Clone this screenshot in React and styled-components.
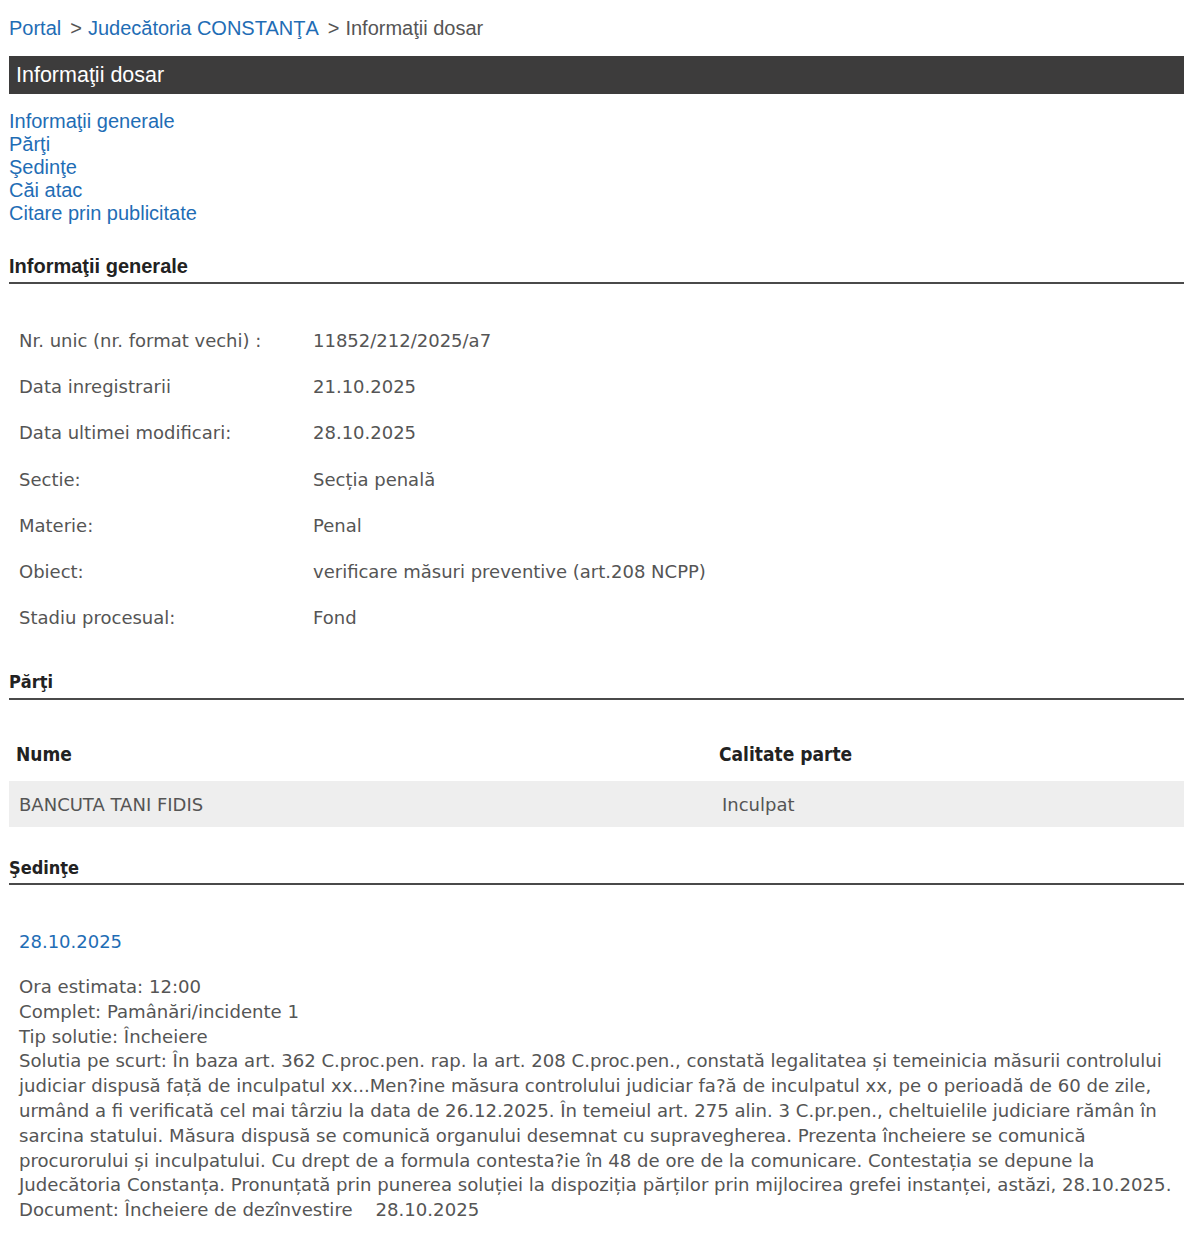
import React from "react";
import styled, { createGlobalStyle } from "styled-components";

const GlobalStyle = createGlobalStyle`
  body {
    margin: 8px;
    background: #ffffff;
    font-family: "Liberation Sans", Arial, sans-serif;
  }
`;

const Page = styled.div`
  width: 1175px;
  padding-left: 1px;
`;

const Breadcrumb = styled.div`
  display: flex;
  align-items: center;
  height: 40px;
  font-size: 20px;
  color: #555555;
`;

const CrumbLink = styled.a`
  color: #1f6db5;
  text-decoration: none;
`;

const CrumbSep = styled.span`
  margin: 0 6px 0 9px;
  color: #555555;
`;

const TitleBar = styled.div`
  margin-top: 8px;
  height: 38px;
  background: #3d3c3c;
  color: #ffffff;
  font-size: 21.5px;
  display: flex;
  align-items: center;
  padding-left: 7px;
  box-sizing: border-box;
`;

const Menu = styled.ul`
  list-style: none;
  margin: 16px 0 0;
  padding: 0;
  font-size: 20px;
  line-height: 23px;
`;

const MenuLink = styled.a`
  color: #1f6db5;
  text-decoration: none;
`;

const SectionTitle = styled.h2`
  margin: ${(p) => p.$top}px 0 0;
  padding: 0 0 ${(p) => p.$gap}px;
  font-family: ${(p) =>
    p.$condensed
      ? '"DejaVu Sans Condensed", "DejaVu Sans", sans-serif'
      : '"Liberation Sans", Arial, sans-serif'};
  font-size: ${(p) => (p.$condensed ? 18 : 20)}px;
  font-weight: bold;
  color: #222222;
  border-bottom: 2px solid #4a4a4a;
  line-height: 24px;
`;

const InfoTable = styled.div`
  margin-top: 33px;
  display: grid;
  grid-template-columns: 294px 1fr;
  padding-left: 10px;
  font-family: "DejaVu Sans", Verdana, sans-serif;
  font-size: 18px;
  color: #555555;
`;

const InfoCell = styled.div`
  height: 46.3px;
  display: flex;
  align-items: center;
`;

const PartyTable = styled.div`
  margin-top: 31px;
`;

const PartyRow = styled.div`
  display: grid;
  grid-template-columns: 703px 1fr;
  height: ${(p) => (p.$head ? 50 : 46)}px;
  box-sizing: border-box;
  padding-bottom: ${(p) => (p.$head ? 4 : 0)}px;
  align-items: center;
  background: ${(p) => (p.$shaded ? "#eeeeee" : "transparent")};
  color: ${(p) => (p.$head ? "#222222" : "#555555")};
  font-family: ${(p) =>
    p.$head
      ? '"DejaVu Sans Condensed", "DejaVu Sans", sans-serif'
      : '"DejaVu Sans", Verdana, sans-serif'};
  font-size: ${(p) => (p.$head ? 19 : 18)}px;
  font-weight: ${(p) => (p.$head ? "bold" : "normal")};
  padding-left: ${(p) => (p.$head ? 7 : 10)}px;
`;

const Hearing = styled.div`
  padding: 46px 10px 0;
  font-family: "DejaVu Sans", Verdana, sans-serif;
  font-size: 18.1px;
  color: #555555;
`;

const HearingDate = styled.div`
  color: #1f6db5;
  font-size: 18px;
  margin-bottom: 23px;
`;

const HearingText = styled.p`
  margin: 0;
  line-height: 24.8px;
`;

const menuItems = [
  "Informaţii generale",
  "Părţi",
  "Şedinţe",
  "Căi atac",
  "Citare prin publicitate",
];

const info = [
  ["Nr. unic (nr. format vechi) :", "11852/212/2025/a7"],
  ["Data inregistrarii", "21.10.2025"],
  ["Data ultimei modificari:", "28.10.2025"],
  ["Sectie:", "Secția penală"],
  ["Materie:", "Penal"],
  ["Obiect:", "verificare măsuri preventive (art.208 NCPP)"],
  ["Stadiu procesual:", "Fond"],
];

export default function App() {
  return (
    <>
      <GlobalStyle />
      <Page>
        <Breadcrumb>
          <CrumbLink href="#">Portal</CrumbLink>
          <CrumbSep>&gt;</CrumbSep>
          <CrumbLink href="#">Judecătoria CONSTANŢA</CrumbLink>
          <CrumbSep>&gt;</CrumbSep>
          <span>Informaţii dosar</span>
        </Breadcrumb>
        <TitleBar>Informaţii dosar</TitleBar>
        <Menu>
          {menuItems.map((m) => (
            <li key={m}>
              <MenuLink href="#">{m}</MenuLink>
            </li>
          ))}
        </Menu>

        <SectionTitle $top={29} $gap={4}>
          Informaţii generale
        </SectionTitle>
        <InfoTable>
          {info.map(([k, v]) => (
            <React.Fragment key={k}>
              <InfoCell>{k}</InfoCell>
              <InfoCell>{v}</InfoCell>
            </React.Fragment>
          ))}
        </InfoTable>

        <SectionTitle $condensed $top={29} $gap={4}>
          Părţi
        </SectionTitle>
        <PartyTable>
          <PartyRow $head>
            <span>Nume</span>
            <span>Calitate parte</span>
          </PartyRow>
          <PartyRow $shaded>
            <span>BANCUTA TANI FIDIS</span>
            <span>Inculpat</span>
          </PartyRow>
        </PartyTable>

        <SectionTitle $condensed $top={29} $gap={3}>
          Şedinţe
        </SectionTitle>
        <Hearing>
          <HearingDate>28.10.2025</HearingDate>
          <HearingText>
            Ora estimata: 12:00
            <br />
            Complet: Pamânări/incidente 1
            <br />
            Tip solutie: Încheiere
            <br />
            Solutia pe scurt: În baza art. 362 C.proc.pen. rap. la art. 208
            C.proc.pen., constată legalitatea și temeinicia măsurii controlului
            judiciar dispusă față de inculpatul xx...Men?ine măsura controlului
            judiciar fa?ă de inculpatul xx, pe o perioadă de 60 de zile, urmând a
            fi verificată cel mai târziu la data de 26.12.2025. În temeiul art.
            275 alin. 3 C.pr.pen., cheltuielile judiciare rămân în sarcina
            statului. Măsura dispusă se comunică organului desemnat cu
            supravegherea. Prezenta încheiere se comunică procurorului și
            inculpatului. Cu drept de a formula contesta?ie în 48 de ore de la
            comunicare. Contestația se depune la Judecătoria Constanța.
            Pronunțată prin punerea soluției la dispoziția părților prin
            mijlocirea grefei instanței, astăzi, 28.10.2025.
            <br />
            Document: Încheiere de dezînvestire&nbsp;&nbsp;&nbsp; 28.10.2025
          </HearingText>
        </Hearing>
      </Page>
    </>
  );
}
